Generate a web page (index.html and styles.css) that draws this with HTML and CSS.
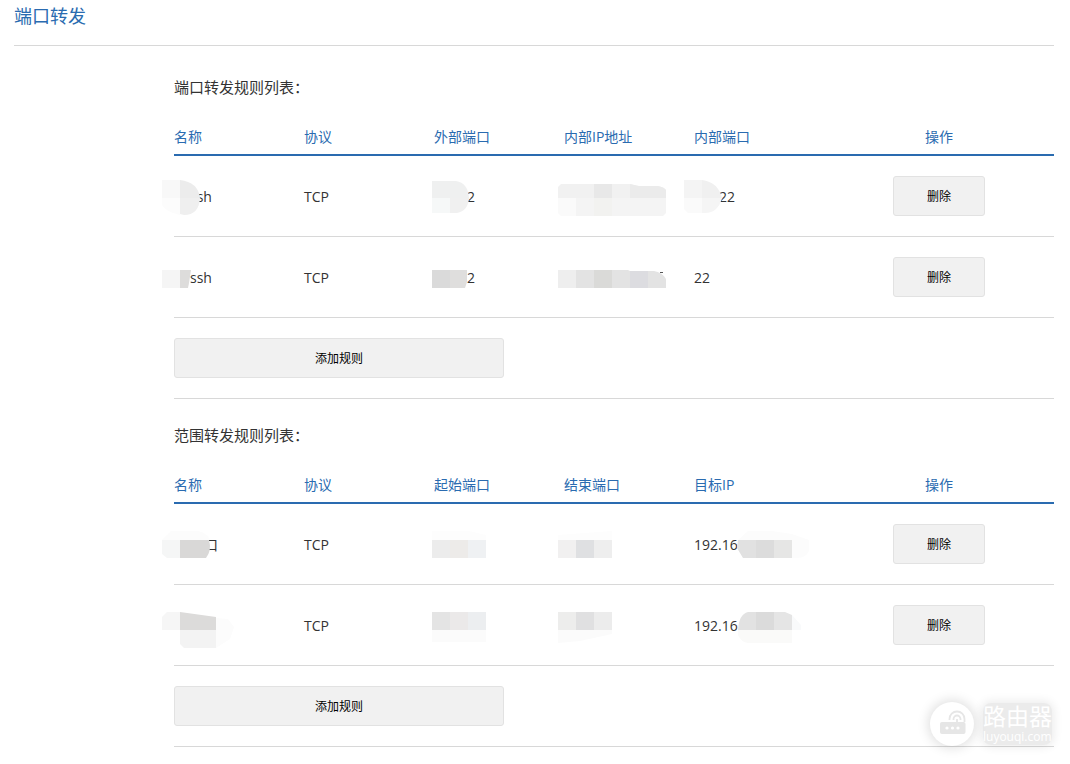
FILE: index.html
```html
<!DOCTYPE html>
<html lang="zh-CN">
<head>
<meta charset="utf-8">
<title>端口转发</title>
<link rel="stylesheet" href="styles.css">
</head>
<body>
<main class="page">
  <h1 class="page-title">端口转发</h1>

  <section class="rules">
    <h2 class="rules-title" id="port-rules">端口转发规则列表：</h2>
    <table class="rules-table" aria-labelledby="port-rules">
      <thead>
        <tr><th>名称</th><th>协议</th><th>外部端口</th><th>内部IP地址</th><th>内部端口</th><th class="action">操作</th></tr>
      </thead>
      <tbody>
        <tr>
          <td><span class="tail tail-name">ssh</span>
            <svg class="mask" viewBox="-12 0 150 80" aria-hidden="true"><path fill="#f8f8f8" d="M-12 24H6V42H-12z"/><path fill="#fcfcfc" d="M-12 42H6V59Q-8 56-12 49z"/><path fill="#ececec" d="M6 24Q24 26 26 42H6z"/><path fill="#efefef" d="M6 42H26Q25 59 10 59L6 58z"/></svg></td>
          <td>TCP</td>
          <td><span class="tail tail-port">2</span>
            <svg class="mask" viewBox="-12 0 150 80" aria-hidden="true"><path fill="#eff0f0" d="M-2 25H22Q34 27 35 42H-2z"/><path fill="#f6f8f8" d="M-2 42H16V57H-2z"/><path fill="#f0f0f0" d="M16 42H35Q34 55 23 57H16z"/></svg></td>
          <td>
            <svg class="mask" viewBox="-12 0 150 80" aria-hidden="true"><path fill="#f1f1f1" d="M-6 31L-3 28H66L74 30L94 30Q100 31 102 34V42H-6z"/><path fill="#e8e8e8" d="M30 28H48V42H30z"/><path fill="#ebebeb" d="M66 28L75 30L94 30Q100 31 102 34V42H66z"/><path fill="#fafafa" d="M-6 42H12V60H-3L-6 57z"/><path fill="#f4f4f4" d="M12 42H102V57L99 60H12z"/><path fill="#f2f2f0" d="M30 42H48V60H30z"/></svg></td>
          <td><span class="tail tail-inner">22</span>
            <svg class="mask" viewBox="-12 0 150 80" aria-hidden="true"><path fill="#f4f4f4" d="M-10 24H8V42H-10z"/><path fill="#f0f0f0" d="M8 24Q24 26 28 42H8z"/><path fill="#fafafa" d="M-10 42H8V57H-6L-10 53z"/><path fill="#f5f5f5" d="M8 42H28Q24 57 11 57H8z"/></svg></td>
          <td class="action"><button type="button" class="btn">删除</button></td>
        </tr>
        <tr>
          <td><span class="tail tail-name">ssh</span>
            <svg class="mask" viewBox="-12 0 150 80" aria-hidden="true"><path fill="#f5f5f5" d="M-12 33H6V51H-12z"/><path fill="#dddcdb" d="M6 33H17L15 46L14 51H6z"/></svg></td>
          <td>TCP</td>
          <td><span class="tail tail-port">2</span>
            <svg class="mask" viewBox="-12 0 150 80" aria-hidden="true"><path fill="#dadada" d="M-2 33H16V51H-2z"/><path fill="#dfdedd" d="M16 33H33V45L31 51H16z"/></svg></td>
          <td>
            <svg class="mask" viewBox="-12 0 150 80" aria-hidden="true"><path fill="#eeeeee" d="M-6 33H12V51H-6z"/><path fill="#e3e3e3" d="M12 33H64L66 34H90Q98 35 102 42V51H12z"/><path fill="#dadad8" d="M30 33H48V51H30z"/><path fill="#dcdce0" d="M66 34H84V51H66z"/><path fill="#555" d="M96 35H99V36H96z"/></svg></td>
          <td>22</td>
          <td class="action"><button type="button" class="btn">删除</button></td>
        </tr>
        <tr><td class="add" colspan="6"><button type="button" class="btn btn-add">添加规则</button></td></tr>
      </tbody>
    </table>
  </section>

  <section class="rules">
    <h2 class="rules-title" id="range-rules">范围转发规则列表：</h2>
    <table class="rules-table" aria-labelledby="range-rules">
      <thead>
        <tr><th>名称</th><th>协议</th><th>起始端口</th><th>结束端口</th><th>目标IP</th><th class="action">操作</th></tr>
      </thead>
      <tbody>
        <tr>
          <td><span class="tail tail-range">口</span>
            <svg class="mask" viewBox="-12 0 150 80" aria-hidden="true"><path fill="#fcfcfc" d="M-12 36L-3 27H24Q33 29 36 36z"/><path fill="#f5f6f6" d="M-12 36H6V54H-7L-12 50z"/><path fill="#d9d8d7" d="M6 36H35Q38 46 32 54H6z"/></svg></td>
          <td>TCP</td>
          <td>
            <svg class="mask" viewBox="-12 0 150 80" aria-hidden="true"><path fill="#fdfdfd" d="M-2 27H35L52 31V36H-2z"/><path fill="#ececec" d="M-2 36H16V54H-2z"/><path fill="#edebe9" d="M16 36H34V54H16z"/><path fill="#eff1f3" d="M34 36H52V54H34z"/></svg></td>
          <td>
            <svg class="mask" viewBox="-12 0 150 80" aria-hidden="true"><path fill="#fdfdfd" d="M-6 31L48 27V36H-6z"/><path fill="#f1f0f0" d="M-6 36H12V54H-6z"/><path fill="#dfe0e2" d="M12 36H30V54H12z"/><path fill="#eeeeee" d="M30 36H48V54H30z"/></svg></td>
          <td>192.16
            <svg class="mask" viewBox="-12 0 150 80" aria-hidden="true"><path fill="#fcfcfc" d="M44 36L54 27H78L98 30L115 36V47Q112 54 103 54H98V36z"/><path fill="#e1e1e1" d="M44 36H62V54H49L43 44z"/><path fill="#dcdcdc" d="M62 36H80V54H62z"/><path fill="#e6e6e5" d="M80 36H98V54H80z"/></svg></td>
          <td class="action"><button type="button" class="btn">删除</button></td>
        </tr>
        <tr>
          <td>
            <svg class="mask" viewBox="-12 0 150 80" aria-hidden="true"><path fill="#f6f6f6" d="M-12 32L-7 27H6V45H-12z"/><path fill="#dcdbda" d="M6 27L42 32V45H6z"/><path fill="#fcfcfc" d="M42 33L54 34L60 42L56 54L42 63z"/><path fill="#f3f3f3" d="M6 45H42V63H10L6 59z"/></svg></td>
          <td>TCP</td>
          <td>
            <svg class="mask" viewBox="-12 0 150 80" aria-hidden="true"><path fill="#e4e4e4" d="M-2 27H16V45H-2z"/><path fill="#ebe9e9" d="M16 27H34V45H16z"/><path fill="#eceef0" d="M34 27H52V45H34z"/><path fill="#fbfbfb" d="M-2 45H52V57H-2z"/></svg></td>
          <td>
            <svg class="mask" viewBox="-12 0 150 80" aria-hidden="true"><path fill="#ededec" d="M-6 27H12V45H-6z"/><path fill="#e0e0e1" d="M12 27H30V45H12z"/><path fill="#ececec" d="M30 27H48V45H30z"/><path fill="#fbfbfb" d="M-6 45H48V49L16 56L-6 58z"/></svg></td>
          <td>192.16
            <svg class="mask" viewBox="-12 0 150 80" aria-hidden="true"><path fill="#e2e2e2" d="M44 45Q45 29 54 27H62V45z"/><path fill="#dbdbdb" d="M62 27H80V45H62z"/><path fill="#e5e5e5" d="M80 27H91L98 30V45H80z"/><path fill="#f9fafb" d="M98 30L107 40V45H98z"/><path fill="#fafaf9" d="M44 45H98V58H54Q47 57 44 50z"/></svg></td>
          <td class="action"><button type="button" class="btn">删除</button></td>
        </tr>
        <tr><td class="add" colspan="6"><button type="button" class="btn btn-add">添加规则</button></td></tr>
      </tbody>
    </table>
  </section>

  <div class="watermark">
    <div class="watermark-badge">
      <svg class="watermark-icon" viewBox="0 0 44 44" aria-hidden="true"><rect x="10" y="20" width="25.500" height="12" rx="2" fill="#e6e6e6"/><path d="M19.500 18V17A7.500 7.500 0 0 1 34.500 17V20M23.500 18V17A3.500 3.500 0 0 1 30.500 17V18M27 17V21" fill="none" stroke="#e6e6e6" stroke-width="1.800"/><g fill="#fff"><circle cx="17" cy="26" r="1.600"/><circle cx="22.500" cy="26" r="1.600"/><circle cx="28" cy="26" r="1.600"/></g></svg>
    </div>
    <div class="watermark-text">
      <span class="watermark-name">路由器</span>
      <span class="watermark-site">luyouqi.com</span>
    </div>
  </div>
</main>
</body>
</html>
```
FILE: styles.css
```css
* { box-sizing: border-box; }

body {
  margin: 0;
  background: #fff;
  color: #333;
  font: 14px/20px "Open Sans", "Noto Sans CJK SC", sans-serif;
}

.page {
  position: relative;
  padding: 0 16px 17px 14px;
}

.page-title {
  margin: 0 0 27px;
  padding: 4px 0 17px;
  border-bottom: 1px solid #d8d8d8;
  color: #2a6bb0;
  font-size: 18px;
  font-weight: 400;
  line-height: 24px;
}

.rules {
  margin: 0 0 22px 160px;
}

.rules:last-of-type { margin-bottom: 0; }

.rules-title {
  margin: 0;
  font-size: 15px;
  font-weight: 400;
  line-height: 28px;
}

.rules-table {
  width: 100%;
  margin-top: 18px;
  border-collapse: separate;
  border-spacing: 0;
  table-layout: fixed;
}

.rules-table th {
  width: 130px;
  padding: 8px 0 7px;
  border-bottom: 2px solid #2a6bb0;
  color: #2a6bb0;
  font-weight: 400;
  text-align: left;
}

.rules-table td {
  position: relative;
  height: 81px;
  padding: 2px 0 0;
  border-bottom: 1px solid #d8d8d8;
}

.rules-table td.action,
.rules-table td.add {
  padding: 0;
}

.rules-table .action {
  width: auto;
  text-align: center;
}

.tail-name { padding-left: 16px; }
.tail-port { padding-left: 33px; }
.tail-inner { padding-left: 25px; }
.tail-range { padding-left: 30px; }

.mask {
  position: absolute;
  top: 0;
  left: -12px;
  width: 150px;
  height: 80px;
  pointer-events: none;
}

.btn {
  display: inline-block;
  width: 92px;
  height: 40px;
  padding: 2px 0 0;
  border: 1px solid #e2e2e2;
  border-radius: 3px;
  background: #f1f1f1;
  color: #000;
  font: inherit;
  font-size: 12px;
  vertical-align: middle;
  cursor: pointer;
}

.btn-add { width: 330px; }

.watermark {
  position: absolute;
  right: 18px;
  bottom: 18px;
  display: flex;
  align-items: center;
  gap: 9px;
  color: #fff;
}

.watermark-badge {
  width: 44px;
  height: 44px;
  border-radius: 50%;
  background: #fff;
  box-shadow: 0 0 12px 2px rgba(0, 0, 0, .13);
}

.watermark-icon { display: block; }

.watermark-text {
  display: flex;
  flex-direction: column;
  border-radius: 8px;
  background: rgba(0, 0, 0, .08);
  box-shadow: 0 0 10px 2px rgba(0, 0, 0, .08);
}

.watermark-name {
  font-size: 23px;
  line-height: 26px;
}

.watermark-site {
  font-size: 12px;
  line-height: 16px;
}
```
